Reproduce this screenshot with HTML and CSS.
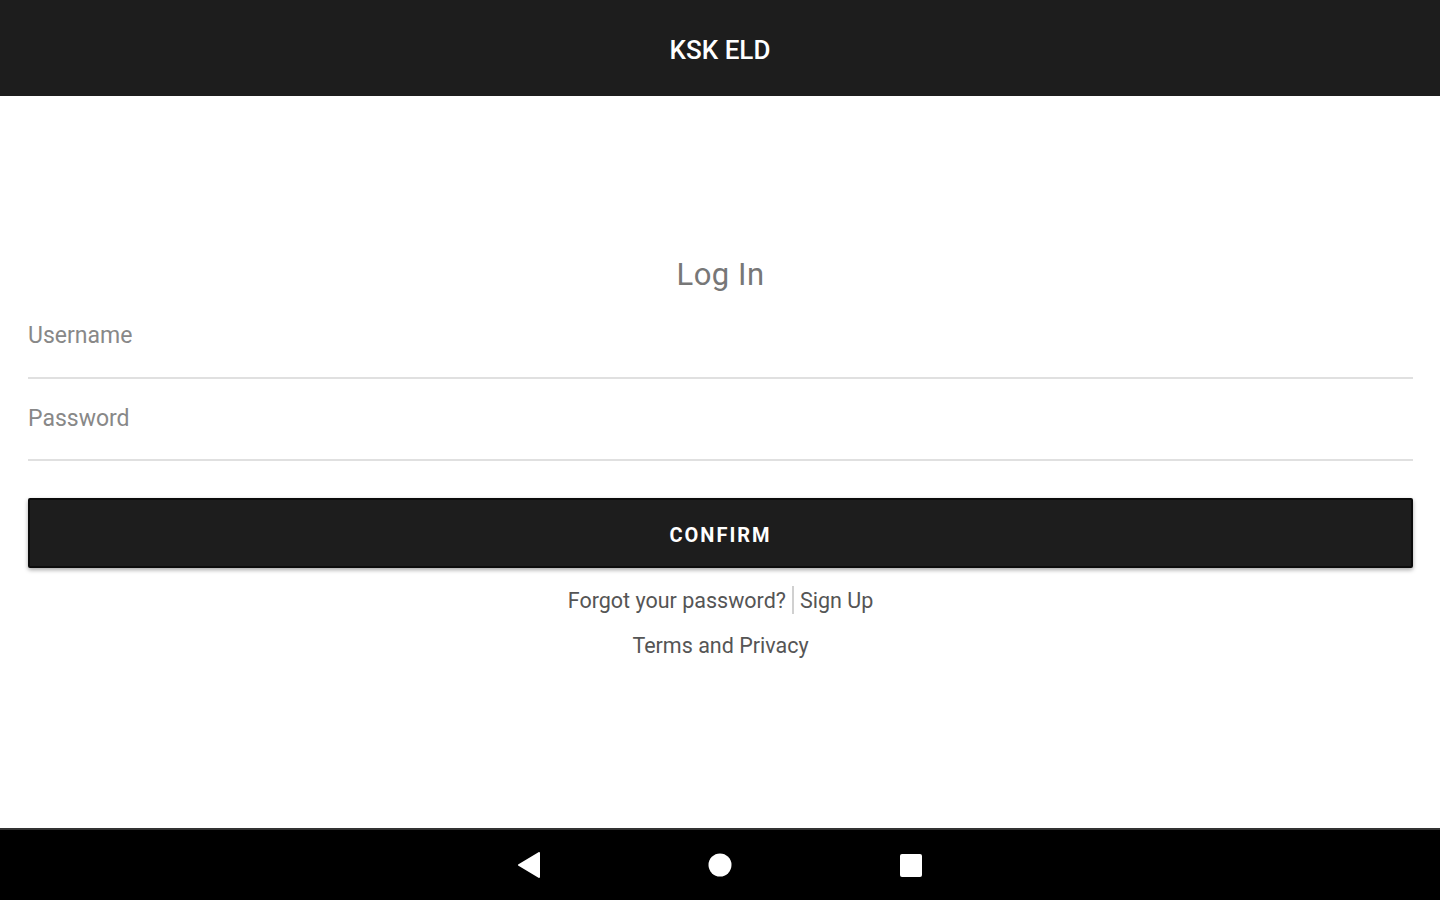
FILE: index.html
```html
<!DOCTYPE html>
<html lang="en">
<head>
    <meta charset="UTF-8">
    <meta name="viewport" content="width=device-width, initial-scale=1.0">
    <title>KSK ELD</title>
    <link rel="stylesheet" href="styles.css">
</head>
<body>

    <header class="app-bar">KSK ELD</header>

    <main class="login">
        <h1 class="login-title">Log In</h1>

        <!-- Polja za prijavu -->
        <div class="field field-user">
            <input type="text" placeholder="Username">
        </div>
        <div class="field field-pass">
            <input type="password" placeholder="Password">
        </div>

        <button class="confirm">CONFIRM</button>

        <div class="links">
            <a href="#">Forgot your password?</a><span class="sep"></span><a href="#">Sign Up</a>
        </div>
        <div class="links terms">
            <a href="#">Terms and Privacy</a>
        </div>
    </main>

    <!-- Android navigacija -->
    <nav class="nav-bar">
        <svg width="24" height="26" viewBox="0 0 24 26"><path d="M22 1 L22 25 L2 13 Z" fill="#fff" stroke="#fff" stroke-width="2" stroke-linejoin="round"/></svg>
        <svg width="24" height="24" viewBox="0 0 24 24"><circle cx="12" cy="12" r="11.5" fill="#fff"/></svg>
        <svg width="24" height="24" viewBox="0 0 24 24"><rect x="1" y="1" width="22" height="23" rx="2" fill="#fff"/></svg>
    </nav>

</body>
</html>
```

FILE: styles.css
```css
/* Osnovni stil */
* {
    box-sizing: border-box;
}

body {
    margin: 0;
    height: 900px;
    font-family: Roboto, 'Liberation Sans', sans-serif;
    background: #fff;
    display: flex;
    flex-direction: column;
    overflow: hidden;
}

/* Gornja traka */
.app-bar {
    height: 96px;
    background: #1d1d1d;
    color: #fff;
    font-size: 26px;
    font-weight: 500;
    display: flex;
    align-items: center;
    justify-content: center;
    padding-top: 4px;
    flex-shrink: 0;
}

/* Forma */
.login {
    flex: 1;
    padding: 161px 27px 0 28px;
    display: flex;
    flex-direction: column;
}

.login-title {
    margin: 0 0 21px;
    height: 36px;
    line-height: 36px;
    text-align: center;
    font-size: 31px;
    font-weight: 400;
    color: #777;
    letter-spacing: 0.5px;
}

.field {
    border-bottom: 2px solid #e0e0e0;
    display: flex;
    align-items: flex-start;
}

.field-user {
    height: 65px;
}

.field-pass {
    height: 82px;
}

.field input {
    border: none;
    outline: none;
    width: 100%;
    font-family: inherit;
    font-size: 23px;
    padding: 0;
    height: 42px;
    background: transparent;
}

.field-pass input {
    margin-top: 18px;
}

.field input::placeholder {
    color: #888;
}

/* Dugme */
.confirm {
    margin-top: 37px;
    height: 70px;
    padding-top: 4px;
    flex-shrink: 0;
    background: #1d1d1d;
    border: 2px solid #0c0c0c;
    border-radius: 2px;
    box-shadow: 0 2px 4px rgba(0, 0, 0, 0.35);
    color: #fff;
    font-family: inherit;
    font-size: 20px;
    font-weight: 700;
    letter-spacing: 2px;
}

/* Linkovi */
.links {
    margin-top: 18px;
    height: 28px;
    display: flex;
    justify-content: center;
    align-items: center;
    font-size: 21.5px;
}

.links a {
    color: #555;
    text-decoration: none;
}

.sep {
    display: inline-block;
    width: 2px;
    height: 28px;
    background: #d0d0d0;
    margin: 0 6px;
}

.terms {
    margin-top: 17px;
}

/* Donja traka */
.nav-bar {
    height: 72px;
    background: #000;
    border-top: 2px solid #333;
    display: flex;
    align-items: center;
    justify-content: center;
    gap: 167px;
    flex-shrink: 0;
}
```
